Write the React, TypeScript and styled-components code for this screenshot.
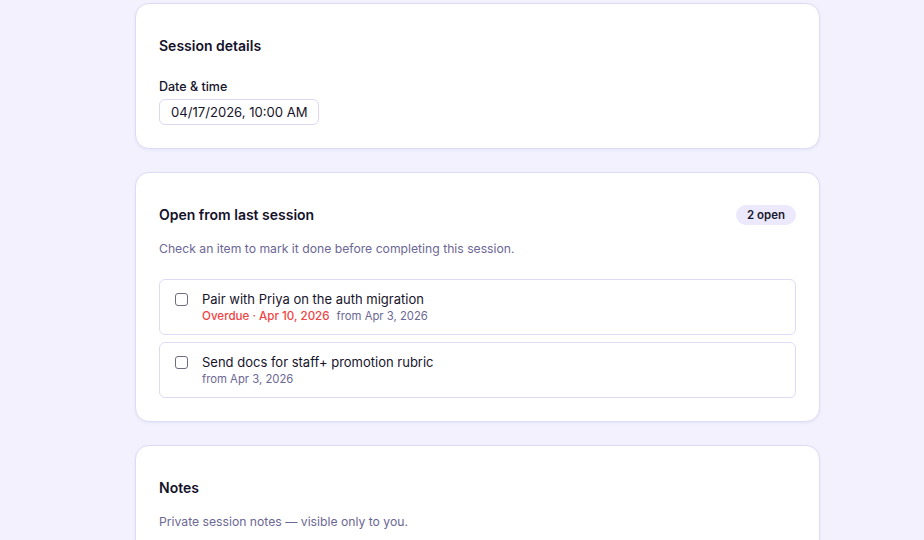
import React from "react";
import styled, { createGlobalStyle } from "styled-components";

const GlobalStyle = createGlobalStyle`
  html, body {
    margin: 0;
    padding: 0;
    background: #f2f1fd;
    font-family: Inter, "Noto Sans", sans-serif;
    color: #16142b;
    -webkit-font-smoothing: antialiased;
  }
`;

const Page = styled.main`
  padding: 3px 104px 40px 135px;
  display: flex;
  flex-direction: column;
  gap: 23px;
`;

const Card = styled.section`
  background: #fff;
  border: 1px solid #dedbf6;
  border-radius: 14px;
  box-shadow: 0 1px 3px rgba(90, 80, 180, 0.08);
  padding: 31px 23px 23px;
`;

const CardHeader = styled.div`
  display: flex;
  align-items: center;
  justify-content: space-between;
`;

const Title = styled.h2`
  margin: 0;
  font-size: 14px;
  line-height: 22px;
  font-weight: 600;
  color: #14122a;
`;

const Badge = styled.span`
  background: #ebe9fb;
  color: #1b1930;
  font-size: 11.5px;
  font-weight: 600;
  line-height: 20px;
  padding: 0 11px;
  border-radius: 999px;
`;

const Hint = styled.p`
  margin: 13px 0 0;
  font-size: 12.2px;
  line-height: 20px;
  color: #6c6794;
`;

const Label = styled.label`
  display: block;
  margin-top: 21px;
  font-size: 12.5px;
  font-weight: 500;
  line-height: 18px;
  color: #16142b;
`;

const DateInput = styled.div`
  margin-top: 3px;
  width: 160px;
  box-sizing: border-box;
  height: 26px;
  border: 1px solid #dcd8f4;
  border-radius: 6px;
  padding: 0 11px;
  display: flex;
  align-items: center;
  white-space: nowrap;
  font-size: 13.1px;
  color: #16142b;
`;

const ItemList = styled.div`
  margin-top: 20px;
  display: flex;
  flex-direction: column;
  gap: 7px;
`;

const Item = styled.label`
  display: flex;
  align-items: flex-start;
  gap: 14px;
  border: 1px solid #dedbf6;
  border-radius: 6px;
  padding: 10px 16px 10px 15px;
`;

const Check = styled.span`
  flex: none;
  width: 13px;
  height: 13px;
  margin-top: 3px;
  box-sizing: border-box;
  border: 1px solid #6f6c82;
  border-radius: 3px;
  background: #fff;
`;

const ItemText = styled.div`
  display: flex;
  flex-direction: column;
`;

const ItemTitle = styled.span`
  font-size: 13px;
  line-height: 18px;
  color: #16142b;
`;

const Meta = styled.span`
  font-size: 11.3px;
  line-height: 16px;
  color: #6c6794;
  display: flex;
  gap: 7px;
`;

const Overdue = styled.span`
  color: #ef4444;
  font-weight: 500;
  font-size: 11.6px;
`;

const NotesBody = styled.div`
  height: 80px;
`;

const items = [
  { title: "Pair with Priya on the auth migration", due: "Overdue · Apr 10, 2026", from: "from Apr 3, 2026" },
  { title: "Send docs for staff+ promotion rubric", from: "from Apr 3, 2026" },
];

export default function App() {
  return (
    <>
      <GlobalStyle />
      <Page>
        <Card>
          <Title>Session details</Title>
          <Label>Date &amp; time</Label>
          <DateInput>04/17/2026, 10:00 AM</DateInput>
        </Card>

        <Card>
          <CardHeader>
            <Title>Open from last session</Title>
            <Badge>2 open</Badge>
          </CardHeader>
          <Hint>Check an item to mark it done before completing this session.</Hint>
          <ItemList>
            {items.map((it) => (
              <Item key={it.title}>
                <Check />
                <ItemText>
                  <ItemTitle>{it.title}</ItemTitle>
                  <Meta>
                    {it.due && <Overdue>{it.due}</Overdue>}
                    <span>{it.from}</span>
                  </Meta>
                </ItemText>
              </Item>
            ))}
          </ItemList>
        </Card>

        <Card>
          <Title>Notes</Title>
          <Hint>Private session notes — visible only to you.</Hint>
          <NotesBody />
        </Card>
      </Page>
    </>
  );
}
